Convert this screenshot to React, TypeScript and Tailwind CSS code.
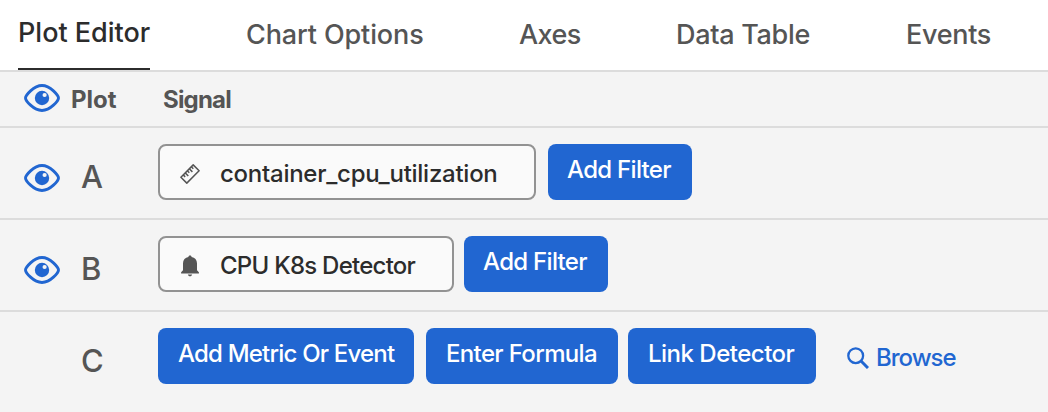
import React from "react";

function Eye() {
  return (
    <svg viewBox="0 0 36 28" className="h-7 w-9 shrink-0" fill="none">
      <path
        d="M1.500 14C1.500 11.500 9.500 1.500 18 1.500S34.500 11.500 34.500 14C34.500 16.500 26.500 26.500 18 26.500S1.500 16.500 1.500 14Z"
        stroke="#2166d1"
        strokeWidth="2.900"
        strokeLinejoin="round"
      />
      <circle cx="18" cy="14" r="7.200" fill="#2166d1" />
      <circle cx="20.600" cy="11" r="2.100" fill="#f4f4f4" />
    </svg>
  );
}

function Ruler() {
  return (
    <svg viewBox="0 0 20 20" className="mt-1 h-5 w-5 shrink-0" fill="none" stroke="#555" strokeWidth="1.500">
      <path d="M13.200 0.900 19.100 6.800 6.800 19.100 0.900 13.200Z" strokeLinejoin="round" />
      <path d="M3.200 10.900 5.200 12.900M5.200 8.900 8.300 12M7.300 6.800 9.300 8.800M9.300 4.800 12.400 7.900M11.300 2.800 13.300 4.800" />
    </svg>
  );
}

function Bell() {
  return (
    <svg viewBox="0 0 20 22" className="mt-1 h-[22px] w-5 shrink-0" fill="#555">
      <path d="M8.400 2.100C8.400 1.200 9 .6 10 .6s1.600.6 1.600 1.500C14.800 2.800 17 5 17 8.200v7l1.900 2.100v1.300H1.100v-1.300L3 15.200v-7C3 5 5.200 2.800 8.400 2.100Z" />
      <path d="M7.900 19.500h4.200c-.2 1.100-1 1.800-2.100 1.800s-1.900-.7-2.100-1.800Z" />
    </svg>
  );
}

function Search() {
  return (
    <svg viewBox="0 0 22 22" className="h-[22px] w-[22px] shrink-0" fill="none" stroke="#2166d1">
      <circle cx="8.700" cy="8.700" r="7.400" strokeWidth="2.300" />
      <path d="M13.800 13.800 21 21" strokeWidth="3" />
    </svg>
  );
}

function Button({ className, children }: { className: string; children: React.ReactNode }) {
  return (
    <button
      className={`flex h-14 shrink-0 rounded-lg bg-[#2166d1] pt-[10px] text-2xl leading-8 font-medium whitespace-nowrap text-white ${className}`}
    >
      {children}
    </button>
  );
}

function Signal({ icon, label, className }: { icon: React.ReactNode; label: string; className: string }) {
  return (
    <div
      className={`flex h-14 shrink-0 items-center gap-5 rounded-lg border-2 border-[#929292] bg-[#fafafa] pl-5 text-2xl font-[450] whitespace-nowrap text-[#2c2c2c] ${className}`}
    >
      {icon}
      <span className="pt-[3px] leading-8">{label}</span>
    </div>
  );
}

function Row({ letter, visible, children }: { letter: string; visible: boolean; children: React.ReactNode }) {
  return (
    <div className="flex h-[92px] items-start border-b-2 border-[#dcdcdc] pt-4 last:border-b-0">
      <div className="flex h-14 w-[60px] items-center justify-end pt-3">{visible && <Eye />}</div>
      <div className="flex h-14 w-[98px] items-center pt-2 pl-[21px] text-[31px] leading-none font-[450] text-[#555]">
        {letter}
      </div>
      {children}
    </div>
  );
}

export default function App() {
  return (
    <div className="h-[412px] w-[1048px] overflow-hidden bg-[#f4f4f4] font-['Inter',sans-serif]">
      <nav className="flex h-[72px] gap-24 border-b-2 border-[#dcdcdc] bg-white pl-[18px] text-[27px] leading-8 font-[450] whitespace-nowrap text-[#555]">
        <div className="h-[70px] w-[132px] border-b-2 border-[#2c2c2c] pt-[17px] text-[#2c2c2c]">
          <span>Plot Editor</span>
        </div>
        <div className="w-[177px] pt-[19px] tracking-[-0.12px]"><span>Chart Options</span></div>
        <div className="w-[61px] pt-[19px] tracking-[-0.6px]"><span>Axes</span></div>
        <div className="w-[134px] pt-[19px] tracking-[-0.3px]"><span>Data Table</span></div>
        <div className="w-[84px] pt-[19px] tracking-[-0.3px]"><span>Events</span></div>
      </nav>
      <header className="flex h-14 items-center border-b-2 border-[#dcdcdc] pl-6 text-2xl font-bold text-[#555]">
        <div className="pb-[2px]"><Eye /></div>
        <span className="w-[92px] pt-[2px] pl-[11px]">Plot</span>
        <span className="pt-[2px] pl-[11px] tracking-[-0.8px]">Signal</span>
      </header>
      <Row letter="A" visible>
        <Signal icon={<Ruler />} label="container_cpu_utilization" className="w-[378px] tracking-[-0.26px]" />
        <Button className="ml-3 w-36 pl-[19px] tracking-[-0.7px]">Add Filter</Button>
      </Row>
      <Row letter="B" visible>
        <Signal icon={<Bell />} label="CPU K8s Detector" className="w-[296px] tracking-[-0.75px]" />
        <Button className="ml-[10px] w-36 pl-[19px] tracking-[-0.7px]">Add Filter</Button>
      </Row>
      <Row letter="C" visible={false}>
        <Button className="w-64 pl-5 tracking-[-0.8px]">Add Metric Or Event</Button>
        <Button className="ml-3 w-48 pl-5 tracking-[-0.65px]">Enter Formula</Button>
        <Button className="ml-[10px] w-[188px] pl-5 tracking-[-0.5px]">Link Detector</Button>
        <a className="ml-[31px] flex h-14 items-center gap-[7px] pt-1 text-2xl font-medium tracking-[-1px] text-[#2166d1]">
          <Search />
          <span>Browse</span>
        </a>
      </Row>
    </div>
  );
}
